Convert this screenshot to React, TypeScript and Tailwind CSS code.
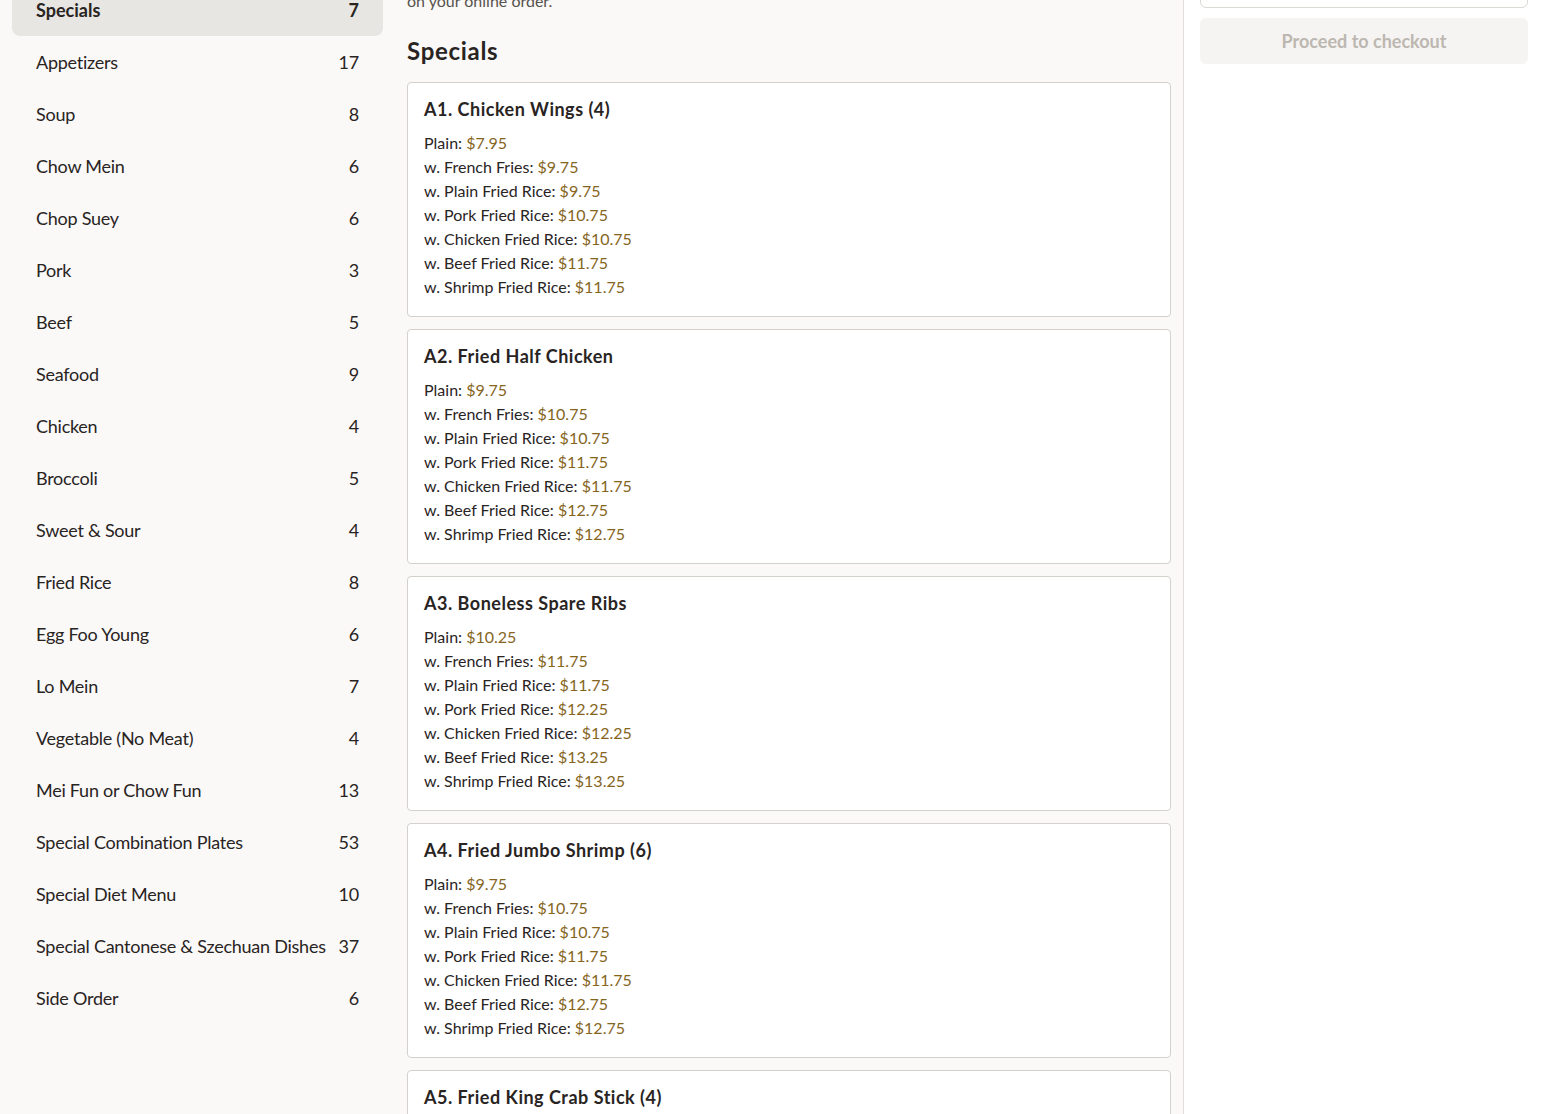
import React from "react";

const CATEGORIES: [string, number][] = [
  ["Specials", 7],
  ["Appetizers", 17],
  ["Soup", 8],
  ["Chow Mein", 6],
  ["Chop Suey", 6],
  ["Pork", 3],
  ["Beef", 5],
  ["Seafood", 9],
  ["Chicken", 4],
  ["Broccoli", 5],
  ["Sweet & Sour", 4],
  ["Fried Rice", 8],
  ["Egg Foo Young", 6],
  ["Lo Mein", 7],
  ["Vegetable (No Meat)", 4],
  ["Mei Fun or Chow Fun", 13],
  ["Special Combination Plates", 53],
  ["Special Diet Menu", 10],
  ["Special Cantonese & Szechuan Dishes", 37],
  ["Side Order", 6],
];

const OPTIONS = [
  "Plain",
  "w. French Fries",
  "w. Plain Fried Rice",
  "w. Pork Fried Rice",
  "w. Chicken Fried Rice",
  "w. Beef Fried Rice",
  "w. Shrimp Fried Rice",
];

const ITEMS: { name: string; prices: string[] }[] = [
  { name: "A1. Chicken Wings (4)", prices: ["7.95", "9.75", "9.75", "10.75", "10.75", "11.75", "11.75"] },
  { name: "A2. Fried Half Chicken", prices: ["9.75", "10.75", "10.75", "11.75", "11.75", "12.75", "12.75"] },
  { name: "A3. Boneless Spare Ribs", prices: ["10.25", "11.75", "11.75", "12.25", "12.25", "13.25", "13.25"] },
  { name: "A4. Fried Jumbo Shrimp (6)", prices: ["9.75", "10.75", "10.75", "11.75", "11.75", "12.75", "12.75"] },
  { name: "A5. Fried King Crab Stick (4)", prices: ["7.95", "9.75", "9.75", "10.75", "10.75", "11.75", "11.75"] },
];

export default function App() {
  return (
    <div
      className="flex h-[1114px] overflow-hidden bg-[#faf9f7] text-[#29241f]"
      style={{ fontFamily: "Lato, 'Noto Sans', sans-serif" }}
    >
      {/* category sidebar */}
      <aside className="w-[395px] shrink-0 px-3">
        <nav className="-mt-[16px] flex flex-col">
          {CATEGORIES.map(([name, count], i) => (
            <div
              key={name}
              className={`flex h-[52px] items-center justify-between gap-3 rounded-lg px-6 text-[18px] ${
                i === 0 ? "bg-[#e8e6e3] font-bold" : "tracking-[-0.25px]"
              }`}
            >
              <span>{name}</span>
              <span>{count}</span>
            </div>
          ))}
        </nav>
      </aside>

      {/* menu list */}
      <main className="w-[789px] shrink-0 border-r border-[#e2dfdb] px-3">
        <p className="-mt-[11px] text-[16px] leading-6 text-[#57534e]">on your online order.</p>
        <h2 className="mt-[22px] text-[24px] font-bold leading-8 tracking-[0.7px]">Specials</h2>
        <div className="mt-[15px] flex flex-col gap-3">
          {ITEMS.map((item) => (
            <div key={item.name} className="rounded border border-[#d4d0cc] bg-white px-4 pt-4 pb-[17px]">
              <h3 className="text-[18px] font-bold leading-5 tracking-[0.5px]">{item.name}</h3>
              <div className="mt-3 flex flex-col text-[16px] leading-6">
                {OPTIONS.map((opt, j) => (
                  <div key={opt}>
                    {opt}: <span className="text-[#85651d]">${item.prices[j]}</span>
                  </div>
                ))}
              </div>
            </div>
          ))}
        </div>
      </main>

      {/* cart */}
      <aside className="flex-1 bg-white px-4">
        <div className="-mt-[20px] h-[28px] rounded-md border border-[#dcd9d5]" />
        <button
          type="button"
          disabled
          className="mt-[10px] h-[46px] w-full rounded-md bg-[#f5f4f2] text-[18px] font-bold text-[#bcb7b0]"
        >
          Proceed to checkout
        </button>
      </aside>
    </div>
  );
}
